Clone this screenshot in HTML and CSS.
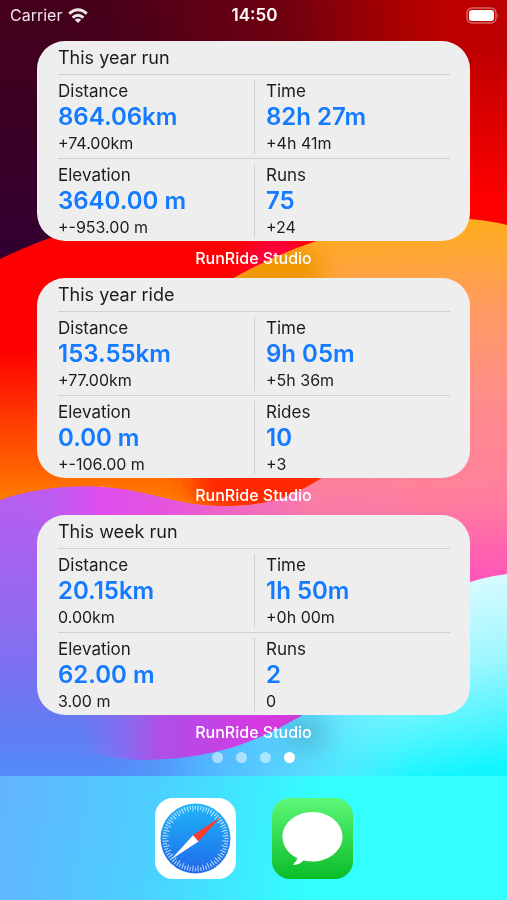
FILE: index.html
```html
<!DOCTYPE html>
<html lang="en">
<head>
<meta charset="utf-8">
<meta name="viewport" content="width=device-width, initial-scale=1">
<title>Home Screen</title>
<link rel="stylesheet" href="styles.css">
</head>
<body>
<svg class="wallpaper" viewBox="0 0 507 900" preserveAspectRatio="none" aria-hidden="true">
  <defs>
    <linearGradient id="night" x1="0" y1="0" x2="0" y2="1"><stop offset="0" stop-color="#45001a"/><stop offset=".3" stop-color="#300032"/></linearGradient>
    <linearGradient id="dusk" gradientUnits="userSpaceOnUse" x1="60" y1="30" x2="440" y2="0"><stop offset="0" stop-color="#45001a" stop-opacity="0"/><stop offset=".3" stop-color="#580016"/><stop offset=".6" stop-color="#700010"/><stop offset=".88" stop-color="#a80000"/><stop offset="1" stop-color="#bc0000"/></linearGradient>
    <linearGradient id="crimson" gradientUnits="userSpaceOnUse" x1="0" y1="45" x2="0" y2="200"><stop offset="0" stop-color="#bc0000"/><stop offset="1" stop-color="#ff0000"/></linearGradient>
    <linearGradient id="ember" gradientUnits="userSpaceOnUse" x1="0" y1="350" x2="0" y2="500"><stop offset="0" stop-color="#ff0000"/><stop offset="1" stop-color="#ff7c00"/></linearGradient>
    <linearGradient id="peach" gradientUnits="userSpaceOnUse" x1="440" y1="220" x2="460" y2="590"><stop offset="0" stop-color="#ffae1c"/><stop offset=".25" stop-color="#ff9a62"/><stop offset=".5" stop-color="#ff8c8c"/><stop offset=".75" stop-color="#ff7f9c"/><stop offset="1" stop-color="#ff50bc"/></linearGradient>
    <linearGradient id="violet" gradientUnits="userSpaceOnUse" x1="0" y1="490" x2="0" y2="776"><stop offset="0" stop-color="#b95df0"/><stop offset=".45" stop-color="#906af0"/><stop offset=".8" stop-color="#667af2"/><stop offset="1" stop-color="#528bf8"/></linearGradient>
    <linearGradient id="orchid" gradientUnits="userSpaceOnUse" x1="30" y1="0" x2="310" y2="0"><stop offset="0" stop-color="#c858f0" stop-opacity="0"/><stop offset=".25" stop-color="#e04cee"/><stop offset=".5" stop-color="#e655dc"/><stop offset="1" stop-color="#fa7ba8"/></linearGradient>
    <linearGradient id="magenta" gradientUnits="userSpaceOnUse" x1="80" y1="0" x2="300" y2="0"><stop offset="0" stop-color="#a060f0" stop-opacity="0"/><stop offset=".35" stop-color="#ac50e8"/><stop offset="1" stop-color="#e630e0"/></linearGradient>
    <linearGradient id="ice" gradientUnits="userSpaceOnUse" x1="440" y1="580" x2="480" y2="770"><stop offset="0" stop-color="#dcfbff"/><stop offset=".45" stop-color="#a0f6ff"/><stop offset="1" stop-color="#12f5ff"/></linearGradient>
    <linearGradient id="shore" gradientUnits="userSpaceOnUse" x1="90" y1="0" x2="410" y2="0"><stop offset="0" stop-color="#528bf8" stop-opacity="0"/><stop offset=".35" stop-color="#52b4ff"/><stop offset=".65" stop-color="#58d8ff"/><stop offset="1" stop-color="#60efff" stop-opacity="0"/></linearGradient>
    <filter id="b12" filterUnits="userSpaceOnUse" x="-100" y="-100" width="800" height="1100"><feGaussianBlur stdDeviation="12"/></filter>
    <clipPath id="redClip"><path d="M0 259Q60 230 130 215L507 100V560H0Z"/></clipPath>
    <clipPath id="peachClip"><path d="M190 305C250 265 300 244 350 231C410 215 465 215 507 225V620H100V486C175 500 190 507 235 506C270 504 290 498 322 478Q230 430 190 305Z"/></clipPath>
    <clipPath id="violetClip"><path d="M0 500C50 483 100 484 143 493C175 500 190 507 235 506C270 504 290 498 322 478L400 540V776H0Z"/></clipPath>
  </defs>
  <rect width="507" height="900" fill="url(#night)"/>
  <rect width="507" height="60" fill="url(#dusk)"/>
  <rect x="300" y="45" width="207" height="220" fill="url(#crimson)"/>
  <g clip-path="url(#redClip)">
    <rect y="205" width="470" height="350" fill="url(#ember)"/>
    <ellipse cx="265" cy="483" rx="75" ry="35" fill="#ff2600" filter="url(#b12)"/>
    <ellipse cx="275" cy="258" rx="30" ry="24" fill="#ff0045" filter="url(#b12)"/>
  </g>
  <g clip-path="url(#peachClip)">
    <rect x="90" y="200" width="430" height="430" fill="url(#peach)"/>
    <ellipse cx="275" cy="270" rx="50" ry="26" fill="#f09600" filter="url(#b12)"/>
    <ellipse cx="340" cy="510" rx="70" ry="18" fill="#fa7ba8" filter="url(#b12)"/>
  </g>
  <g clip-path="url(#violetClip)">
    <rect width="200" y="480" height="300" fill="url(#violet)"/>
    <rect width="310" y="470" height="100" fill="url(#orchid)"/>
  </g>
  <path d="M507 574Q480 577 450 589Q380 650 301 716L230 776V900H507Z" fill="url(#ice)"/>
  <path d="M80 700H410V776H80Z" fill="url(#shore)"/>
  <path d="M80 690H330L301 716C260 740 215 760 140 760Q110 759 80 750Z" fill="url(#magenta)"/>
  <rect x="285" y="718" width="42" height="30" fill="#407f9c" fill-opacity=".35" filter="url(#b12)"/>
</svg>

<div class="screen">
  <header class="status">
    <div class="carrier">Carrier
      <svg class="wifi" viewBox="0 0 20 15" aria-hidden="true">
        <g fill="none" stroke="#fff" stroke-width="3"><path d="M1.2 5.6Q10-2.200 18.800 5.600"/><path d="M4.600 9.600Q10 4.900 15.400 9.600"/></g>
        <path d="M6.800 11.800Q10 9.200 13.200 11.800L10 15Z" fill="#fff"/>
      </svg>
    </div>
    <time class="clock">14:50</time>
    <svg class="battery" viewBox="0 0 33 17" aria-hidden="true">
      <rect x="1" y="1" width="29" height="15" rx="5" fill="none" stroke="#fff" stroke-opacity=".4" stroke-width="1.500"/>
      <rect x="3" y="3" width="25" height="11" rx="3" fill="#fff"/>
      <path d="M31.500 6.500Q33 8.500 31.500 10.500Z" fill="#fff" fill-opacity=".5"/>
    </svg>
  </header>

  <main class="widgets">
    <section class="widget">
      <div class="card">
        <h2 class="title">This year run</h2>
        <div class="stats">
          <dl class="stat"><dt>Distance</dt><dd class="value">864.06km</dd><dd class="delta">+74.00km</dd></dl>
          <dl class="stat"><dt>Time</dt><dd class="value">82h 27m</dd><dd class="delta">+4h 41m</dd></dl>
          <dl class="stat"><dt>Elevation</dt><dd class="value">3640.00 m</dd><dd class="delta">+-953.00 m</dd></dl>
          <dl class="stat"><dt>Runs</dt><dd class="value">75</dd><dd class="delta">+24</dd></dl>
        </div>
      </div>
      <p class="caption">RunRide Studio</p>
    </section>
    <section class="widget">
      <div class="card">
        <h2 class="title">This year ride</h2>
        <div class="stats">
          <dl class="stat"><dt>Distance</dt><dd class="value">153.55km</dd><dd class="delta">+77.00km</dd></dl>
          <dl class="stat"><dt>Time</dt><dd class="value">9h 05m</dd><dd class="delta">+5h 36m</dd></dl>
          <dl class="stat"><dt>Elevation</dt><dd class="value">0.00 m</dd><dd class="delta">+-106.00 m</dd></dl>
          <dl class="stat"><dt>Rides</dt><dd class="value">10</dd><dd class="delta">+3</dd></dl>
        </div>
      </div>
      <p class="caption">RunRide Studio</p>
    </section>
    <section class="widget">
      <div class="card">
        <h2 class="title">This week run</h2>
        <div class="stats">
          <dl class="stat"><dt>Distance</dt><dd class="value">20.15km</dd><dd class="delta">0.00km</dd></dl>
          <dl class="stat"><dt>Time</dt><dd class="value">1h 50m</dd><dd class="delta">+0h 00m</dd></dl>
          <dl class="stat"><dt>Elevation</dt><dd class="value">62.00 m</dd><dd class="delta">3.00 m</dd></dl>
          <dl class="stat"><dt>Runs</dt><dd class="value">2</dd><dd class="delta">0</dd></dl>
        </div>
      </div>
      <p class="caption">RunRide Studio</p>
    </section>
  </main>

  <nav class="pages" aria-label="Pages">
    <button class="dot" aria-label="Page 1"></button>
    <button class="dot" aria-label="Page 2"></button>
    <button class="dot" aria-label="Page 3"></button>
    <button class="dot current" aria-label="Page 4" aria-current="page"></button>
  </nav>

  <footer class="dock">
    <button class="app" aria-label="Safari">
      <svg viewBox="0 0 81 81" aria-hidden="true">
        <defs><linearGradient id="sea" x1="0" y1="0" x2="0" y2="1"><stop offset="0" stop-color="#1fb6f8"/><stop offset="1" stop-color="#1f68ea"/></linearGradient></defs>
        <rect width="81" height="81" rx="18" fill="#fff"/>
        <circle cx="40.500" cy="40.500" r="35" fill="url(#sea)"/>
        <circle cx="40.500" cy="40.500" r="31" fill="none" stroke="#fff" stroke-opacity=".7" stroke-width="4" pathLength="144" stroke-dasharray=".8 3.200" stroke-dashoffset=".4"/>
        <circle cx="40.500" cy="40.500" r="30" fill="none" stroke="#fff" stroke-opacity=".7" stroke-width="6" pathLength="144" stroke-dasharray=".8 3.200" stroke-dashoffset="2.400"/>
        <path d="M65.500 19L38 37.200L43.500 43.500Z" fill="#fb3b30"/>
        <path d="M38 37.200L43.500 43.500L16 61.500Z" fill="#fff"/>
      </svg>
    </button>
    <button class="app" aria-label="Messages">
      <svg viewBox="0 0 81 81" aria-hidden="true">
        <defs><linearGradient id="leaf" x1="0" y1="0" x2="0" y2="1"><stop offset="0" stop-color="#5df777"/><stop offset="1" stop-color="#0abc28"/></linearGradient></defs>
        <rect width="81" height="81" rx="18" fill="url(#leaf)"/>
        <path d="M40.500 14C57 14 70.500 25 70.500 38.700S57 63.500 40.500 63.500Q36 63.500 31.500 62.500Q27.500 66.500 22 67Q20.800 66.900 21.500 66Q24.500 63 25.500 60.200C16.500 56 10.500 48 10.500 38.700C10.500 25 24 14 40.500 14Z" fill="#fff"/>
      </svg>
    </button>
  </footer>
</div>
</body>
</html>
```

FILE: styles.css
```css
* { box-sizing: border-box; }

body {
  margin: 0;
  font-family: Inter, "Liberation Sans", sans-serif;
  color: #1c1c1e;
}

h2, p, dl, dd { margin: 0; }

button {
  padding: 0;
  border: 0;
  background: none;
}

.wallpaper {
  position: fixed;
  inset: 0;
  width: 100%;
  height: 100%;
  z-index: -1;
}

.screen {
  display: flex;
  flex-direction: column;
  min-height: 100vh;
}

.status {
  display: grid;
  grid-template-columns: 1fr auto 1fr;
  align-items: center;
  height: 30px;
  padding: 0 8px 0 10px;
  color: #fff;
  font-size: 16px;
}

.carrier {
  display: flex;
  align-items: center;
  gap: 6px;
  opacity: .9;
}

.wifi {
  width: 20px;
  height: 15px;
}

.clock {
  font-size: 17px;
  font-weight: 600;
}

.battery {
  justify-self: end;
  width: 33px;
  height: 17px;
}

.widgets { padding: 11px 37px 0; }

.card {
  padding: 0 20px 0 21px;
  border-radius: 28px;
  background: #eee;
}

.title {
  font-size: 18px;
  font-weight: 400;
  line-height: 33px;
}

.stats {
  display: grid;
  grid-template-columns: 1fr 1fr;
}

.stat {
  position: relative;
  padding: 5px 0 4px;
  border-top: 1px solid #d0d0d1;
}

.stat:nth-child(n+3) { padding-bottom: 3px; }

.stat:nth-child(even) { padding-left: 12px; }

.stat:nth-child(even)::before {
  content: "";
  position: absolute;
  left: 0;
  top: 5px;
  bottom: 4px;
  width: 1px;
  background: #d0d0d1;
}

dt {
  font-size: 17px;
  line-height: 22px;
}

.value {
  color: #147aff;
  font-size: 24px;
  font-weight: 600;
  line-height: 30px;
}

.delta {
  font-size: 16px;
  line-height: 22px;
}

.caption {
  padding: 7px 0 10px;
  color: #fff;
  font-size: 16px;
  font-weight: 500;
  line-height: 20px;
  text-align: center;
}

.pages {
  display: flex;
  justify-content: center;
  gap: 13px;
  margin-bottom: auto;
}

.dot {
  width: 11px;
  height: 11px;
  border-radius: 50%;
  background: rgba(255, 255, 255, .5);
}

.dot.current { background: #fff; }

.dock {
  display: flex;
  justify-content: center;
  gap: 36px;
  padding: 22px 0 21px;
  background: linear-gradient(100deg, #62b4ff, #4ccfff 30%, #33ffff 62%);
}

.app svg {
  display: block;
  width: 81px;
  height: 81px;
}
```
